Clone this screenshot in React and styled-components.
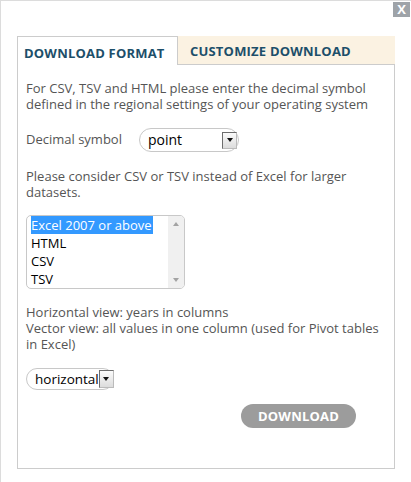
import React from "react";
import styled, { createGlobalStyle } from "styled-components";

const Global = createGlobalStyle`
  html, body { margin: 0; padding: 0; background: #fff; overflow: hidden; }
  body { font-family: "Open Sans", "Liberation Sans", sans-serif; }
`;

const Frame = styled.div`
  position: relative;
  box-sizing: border-box;
  height: 482px;
  border-left: 1px solid #dcdcdc;
  border-top: 1px solid #dcdcdc;
  padding: 35px 16px 0 16px;
`;

const Close = styled.button`
  position: absolute;
  top: 1px;
  right: 1px;
  width: 17px;
  height: 15px;
  padding: 0;
  border: none;
  background: #9ea3a8;
  color: #fff;
  font: bold 13px/15px "Open Sans", "Liberation Sans", sans-serif;
  text-align: center;
`;

const Panel = styled.div`
  width: 378px;
  box-sizing: border-box;
`;

const TabBar = styled.div`
  display: flex;
  height: 29px;
`;

const Tab = styled.div`
  box-sizing: border-box;
  font-size: 13px;
  font-weight: 700;
  color: #1d4f6a;
  letter-spacing: 0.2px;
  ${(p) =>
    p.$active
      ? `
    width: 161px;
    border: 1px solid #ccc;
    border-bottom: none;
    background: #fff;
    padding: 7px 0 0 6px;
  `
      : `
    flex: 1;
    background: #fbf2e2;
    border-bottom: 1px solid #ccc;
    padding: 6px 0 0 12px;
  `}
`;

const Body = styled.div`
  box-sizing: border-box;
  height: 404px;
  border: 1px solid #ccc;
  border-top: none;
  padding: 15px 8px 0 8px;
  color: #555;
  font-size: 13px;
  line-height: 16px;
`;

const Para = styled.p`
  margin: ${(p) => p.$mt || 0}px 0 0;
`;

const Row = styled.div`
  display: flex;
  align-items: center;
  margin-top: ${(p) => p.$mt || 0}px;
`;

const Label = styled.span`
  width: 113px;
  margin-top: -3px;
`;

const Select = styled.div`
  box-sizing: border-box;
  width: ${(p) => p.$w}px;
  height: ${(p) => p.$h}px;
  border: 1px solid #c8c8c8;
  border-radius: 12px;
  background: #fff;
  display: flex;
  align-items: center;
  justify-content: space-between;
  padding: 0 1px 0 8px;
  color: #000;
  font-size: ${(p) => p.$fs || 14}px;
`;

const Arrow = styled.span`
  box-sizing: border-box;
  flex: none;
  width: 15px;
  height: ${(p) => p.$h}px;
  border: 1px solid #6d6d6d;
  border-right-color: #bbb;
  border-bottom-color: #bbb;
  background: linear-gradient(#fbfbfb, #dcdcdc);
  display: flex;
  align-items: center;
  justify-content: center;
  &::after {
    content: "";
    border-left: 3.5px solid transparent;
    border-right: 3.5px solid transparent;
    border-top: 4px solid #111;
  }
`;

const ListBox = styled.div`
  box-sizing: border-box;
  width: 159px;
  height: 74px;
  border: 1px solid #c8c8c8;
  border-radius: 5px;
  display: flex;
  overflow: hidden;
  margin: 15px 0 0;
  background: #fff;
`;

const Options = styled.div`
  flex: 1;
  padding: 0 0 0 4px;
  color: #000;
  font-size: 13px;
  line-height: 18px;
`;

const Option = styled.div`
  height: 18px;
  span {
    background: ${(p) => (p.$selected ? "#3399ff" : "transparent")};
    color: ${(p) => (p.$selected ? "#fff" : "#000")};
    display: inline-block;
    padding-right: 1px;
  }
`;

const Scroll = styled.div`
  width: 16px;
  background: #f0f0f0;
  display: flex;
  flex-direction: column;
  justify-content: space-between;
  align-items: center;
  padding: 6px 0;
`;

const ScrollArrow = styled.span`
  width: 0;
  height: 0;
  border-left: 3.5px solid transparent;
  border-right: 3.5px solid transparent;
  ${(p) =>
    p.$up
      ? "border-bottom: 4px solid #a3a3a3;"
      : "border-top: 4px solid #a3a3a3;"}
`;

const Actions = styled.div`
  display: flex;
  justify-content: flex-end;
  padding-right: 30px;
  margin-top: 14px;
`;

const Button = styled.button`
  width: 115px;
  height: 24px;
  border: none;
  border-radius: 12px;
  background: #9c9c9c;
  color: #fff;
  font: 700 13px "Open Sans", "Liberation Sans", sans-serif;
  letter-spacing: 0.2px;
  padding: 0;
`;

export default function App() {
  return (
    <>
      <Global />
      <Frame>
        <Close>X</Close>
        <Panel>
          <TabBar>
            <Tab $active>DOWNLOAD FORMAT</Tab>
            <Tab>CUSTOMIZE DOWNLOAD</Tab>
          </TabBar>
          <Body>
            <Para>
              For CSV, TSV and HTML please enter the decimal symbol defined in
              the regional settings of your operating system
            </Para>
            <Row $mt={16}>
              <Label>Decimal symbol</Label>
              <Select $w={100} $h={24}>
                point
                <Arrow $h={17} />
              </Select>
            </Row>
            <Para $mt={16}>
              Please consider CSV or TSV instead of Excel for larger datasets.
            </Para>
            <ListBox>
              <Options>
                <Option $selected>
                  <span>Excel 2007 or above</span>
                </Option>
                <Option>
                  <span>HTML</span>
                </Option>
                <Option>
                  <span>CSV</span>
                </Option>
                <Option>
                  <span>TSV</span>
                </Option>
              </Options>
              <Scroll>
                <ScrollArrow $up />
                <ScrollArrow />
              </Scroll>
            </ListBox>
            <Para $mt={15}>Horizontal view: years in columns</Para>
            <Para>
              Vector view: all values in one column (used for Pivot tables in
              Excel)
            </Para>
            <Row $mt={16}>
              <Select $w={88} $h={22} $fs={13.5}>
                horizontal
                <Arrow $h={18} />
              </Select>
            </Row>
            <Actions>
              <Button>DOWNLOAD</Button>
            </Actions>
          </Body>
        </Panel>
      </Frame>
    </>
  );
}
